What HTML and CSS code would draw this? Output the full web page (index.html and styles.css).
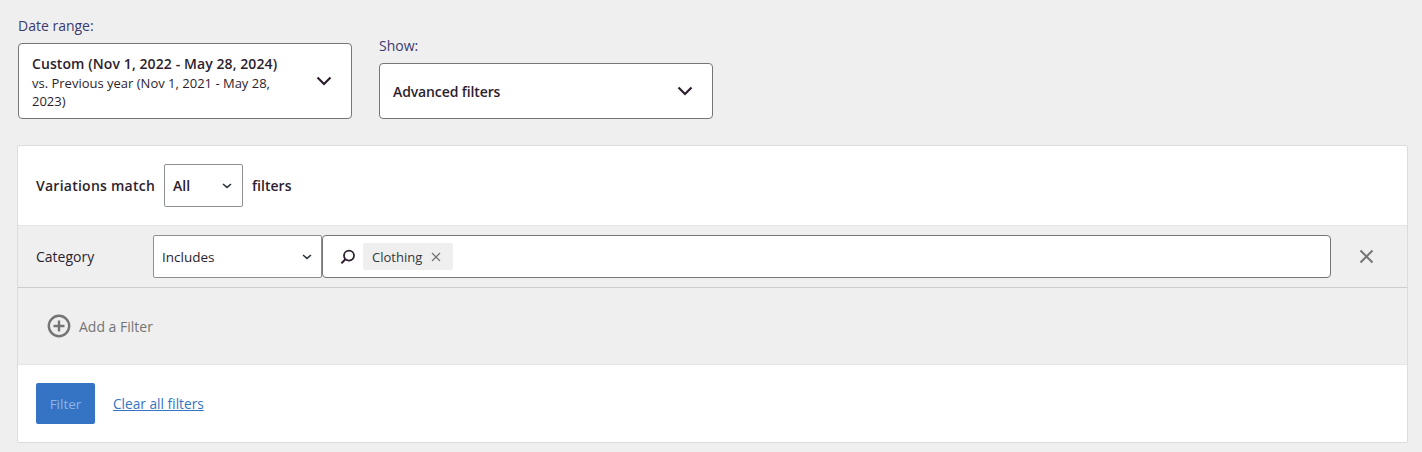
FILE: index.html
```html
<!DOCTYPE html>
<html lang="en">
<head>
  <meta charset="UTF-8" />
  <meta name="viewport" content="width=device-width, initial-scale=1.0"/>
  <title>Variations filters</title>
  <link rel="stylesheet" href="styles.css">
</head>
<body>

  <div class="top-filters">
    <div class="filter-group">
      <label class="filter-label">Date range:</label>
      <div class="dropdown">
        <div class="dropdown-text">
          <div class="dropdown-title date-title">Custom (Nov 1, 2022 - May 28, 2024)</div>
          <div class="dropdown-sub">vs. Previous year (Nov 1, 2021 - May 28, 2023)</div>
        </div>
        <svg class="chevron" width="24" height="24" viewBox="0 0 24 24"><path d="M5.5 8.5 12 15l6.5-6.5" fill="none" stroke="#2c1e2e" stroke-width="2.2"/></svg>
      </div>
    </div>
    <div class="filter-group">
      <label class="filter-label">Show:</label>
      <div class="dropdown dropdown-short">
        <div class="dropdown-text">
          <div class="dropdown-title show-title">Advanced filters</div>
        </div>
        <svg class="chevron" width="24" height="24" viewBox="0 0 24 24"><path d="M5.5 8.5 12 15l6.5-6.5" fill="none" stroke="#2c1e2e" stroke-width="2.2"/></svg>
      </div>
    </div>
  </div>

  <div class="card">
    <div class="match-row">
      <span class="match-label">Variations match</span>
      <div class="select select-all">
        <span>All</span>
        <svg width="10" height="6" viewBox="0 0 10 6"><path d="M1 1l4 3.4L9 1" fill="none" stroke="#2c3338" stroke-width="1.5"/></svg>
      </div>
      <span>filters</span>
    </div>

    <div class="rule-row">
      <span class="rule-name">Category</span>
      <div class="select select-rule">
        <span>Includes</span>
        <svg width="10" height="6" viewBox="0 0 10 6"><path d="M1 1l4 3.4L9 1" fill="none" stroke="#2c3338" stroke-width="1.5"/></svg>
      </div>
      <div class="search-box">
        <svg class="search-icon" width="18" height="18" viewBox="0 0 18 18"><circle cx="10" cy="7.6" r="5" fill="none" stroke="#2c1e2e" stroke-width="1.8"/><path d="M6.4 11.2 2.4 15.4" stroke="#2c1e2e" stroke-width="2"/></svg>
        <span class="tag">Clothing
          <svg width="10" height="10" viewBox="0 0 10 10"><path d="M1 1l8 8M9 1l-8 8" stroke="#757575" stroke-width="1.3"/></svg>
        </span>
      </div>
      <svg class="remove-rule" width="15" height="15" viewBox="0 0 15 15"><path d="M1.5 1.5l12 12M13.5 1.5l-12 12" stroke="#757575" stroke-width="2"/></svg>
    </div>

    <div class="add-row">
      <svg width="24" height="24" viewBox="0 0 24 24"><circle cx="12" cy="12" r="10.2" fill="none" stroke="#757575" stroke-width="2.4"/><path d="M12 6.5v11M6.5 12h11" stroke="#757575" stroke-width="2.4"/></svg>
      <span>Add a Filter</span>
    </div>

    <div class="action-row">
      <button class="filter-btn">Filter</button>
      <a class="clear-link" href="#">Clear all filters</a>
    </div>
  </div>

</body>
</html>
```

FILE: styles.css
```css
body {
  margin: 0;
  padding: 17px 14px 0 17px;
  background: #efefef;
  color: #2c1e2e;
  font-family: 'Open Sans', sans-serif;
  font-size: 14px;
}

.top-filters {
  display: flex;
  align-items: flex-end;
  gap: 27px;
  padding-left: 1px;
  margin-bottom: 26px;
}

.filter-group {
  width: 334px;
}

.filter-label {
  display: block;
  color: #3a3a70;
  line-height: 18px;
  margin-bottom: 8px;
}

.dropdown {
  height: 76px;
  box-sizing: border-box;
  background: #fff;
  border: 1px solid #757575;
  border-radius: 4px;
  padding: 0 15px 0 13px;
  display: flex;
  align-items: center;
  justify-content: space-between;
}

.dropdown-short {
  height: 56px;
}

.dropdown-text {
  width: 250px;
  padding-top: 1px;
}

.dropdown-title {
  font-weight: 600;
  font-size: 14px;
  line-height: 20px;
}

.date-title {
  letter-spacing: 0.09px;
}

.show-title {
  letter-spacing: -0.12px;
}

.dropdown-sub {
  font-size: 13px;
  line-height: 18px;
}

.card {
  background: #fff;
  border: 1px solid #dcdcde;
  border-radius: 2px;
}

.match-row {
  height: 79px;
  display: flex;
  align-items: center;
  gap: 9px;
  padding-left: 18px;
  font-weight: 600;
}

.match-label {
  letter-spacing: 0.25px;
}

.select {
  box-sizing: border-box;
  background: #fff;
  border: 1px solid #8c8f94;
  border-radius: 2px;
  display: flex;
  align-items: center;
  justify-content: space-between;
  padding: 0 10px 0 8px;
}

.select-all {
  width: 79px;
  height: 43px;
}

.select-rule {
  width: 169px;
  height: 43px;
  padding-right: 9px;
  font-size: 13.5px;
  font-weight: 400;
  margin-left: 29px;
}

.rule-row {
  height: 61px;
  display: flex;
  align-items: center;
  background: #efefef;
  border-top: 1px solid #e6e6e6;
  border-bottom: 1px solid #ccc;
  padding-left: 18px;
}

.rule-name {
  width: 88px;
}

.search-box {
  flex: 1;
  height: 43px;
  box-sizing: border-box;
  background: #fff;
  border: 1px solid #757575;
  border-radius: 4px;
  display: flex;
  align-items: center;
  padding-left: 16px;
}

.search-icon {
  margin-right: 6px;
}

.tag {
  height: 27px;
  display: flex;
  align-items: center;
  gap: 9px;
  padding: 0 12px 0 9px;
  background: #efefef;
  border-radius: 2px;
  color: #32373c;
  font-size: 13px;
}

.remove-rule {
  margin: 0 33px 0 28px;
}

.add-row {
  height: 76px;
  display: flex;
  align-items: center;
  gap: 8px;
  padding-left: 29px;
  background: #efefef;
  border-bottom: 1px solid #e6e6e6;
  color: #757575;
}

.action-row {
  height: 77px;
  display: flex;
  align-items: center;
  gap: 18px;
  padding-left: 18px;
}

.filter-btn {
  width: 59px;
  height: 41px;
  border: none;
  border-radius: 2px;
  background: #3574c4;
  color: #8fb4e2;
  font-family: inherit;
  font-size: 13.5px;
}

.clear-link {
  color: #3574c4;
  font-size: 13.7px;
}
```
